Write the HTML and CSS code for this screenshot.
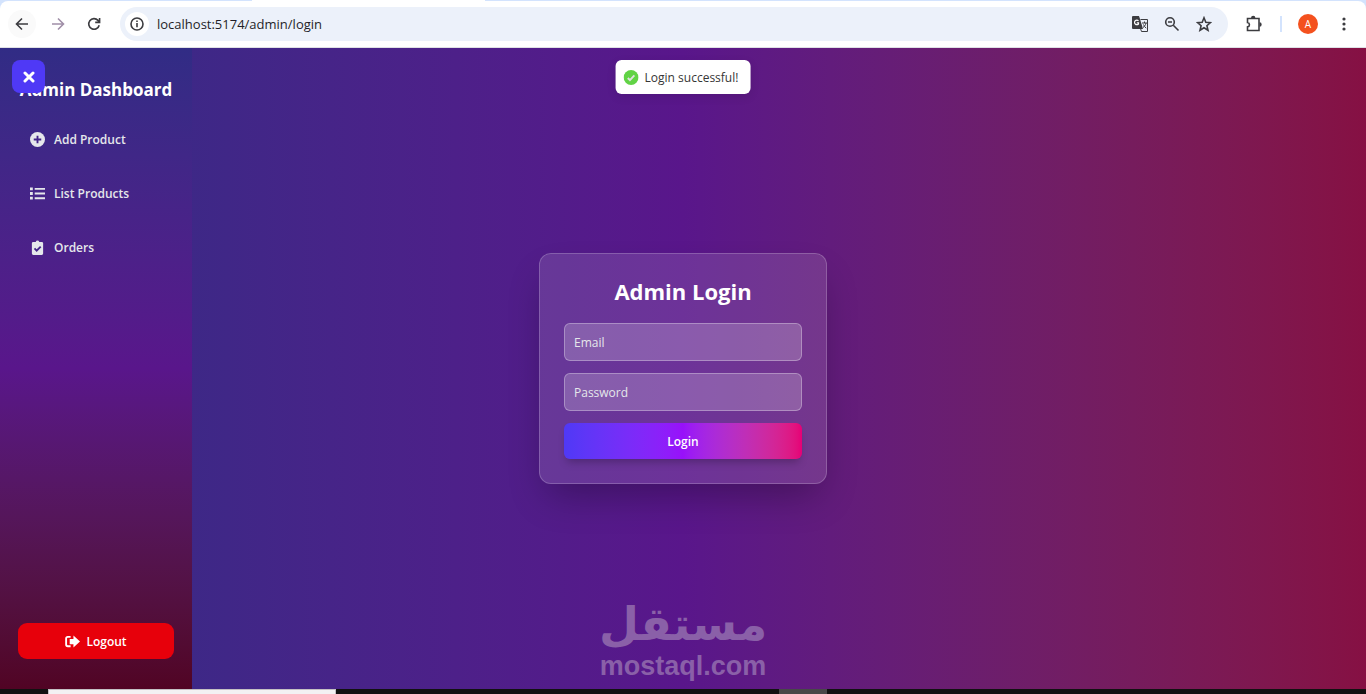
FILE: index.html
```
<!DOCTYPE html>
<html lang="en">
<head>
  <meta charset="UTF-8" />
  <meta name="viewport" content="width=device-width, initial-scale=1" />
  <title>Admin Login</title>
  <link rel="stylesheet" href="styles.css">
</head>
<body>
  <header class="browser">
    <div class="tab"></div>
    <div class="toolbar">
      <button class="tool back" type="button" aria-label="Back">
        <svg width="16" height="16" viewBox="0 0 16 16"><path d="M14 8H3M8 2.5L2.5 8L8 13.5" /></svg>
      </button>
      <button class="tool forward" type="button" aria-label="Forward">
        <svg width="16" height="16" viewBox="0 0 16 16"><path d="M2 8h11M8 2.5L13.5 8L8 13.5" /></svg>
      </button>
      <button class="tool" type="button" aria-label="Reload">
        <svg width="16" height="16" viewBox="0 0 16 16"><path d="M13.2 9.2A5.3 5.3 0 1 1 12 4.4L13.4 6M13.6 2v4.4H9.2" /></svg>
      </button>
      <div class="address">
        <button class="site-info" type="button" aria-label="Site information">
          <svg width="16" height="16" viewBox="0 0 16 16"><circle cx="8" cy="8" r="6" /><path d="M8 7v4.2M8 4.4v1.6" /></svg>
        </button>
        <input class="url" type="text" aria-label="Address" value="localhost:5174/admin/login">
        <button class="tool translate" type="button" aria-label="Translate">
          <svg width="18" height="18" viewBox="0 0 18 18">
            <path class="fill" d="M2 1h6l1 3 3 10H2a1 1 0 0 1-1-1V2a1 1 0 0 1 1-1z" />
            <path d="M9.500 4.500h7v12h-6l-1-3M11 8h5M13.500 6.500V8M15 8c-.4 2-1.500 3.500-3 4.500M12.500 9.500c.6 1.500 1.500 2.700 2.700 3.700" />
            <path class="knock" d="M7.500 5.800A2.300 2.300 0 1 0 7.500 9V7.800H5.800" />
          </svg>
        </button>
        <button class="tool" type="button" aria-label="Zoom">
          <svg width="16" height="16" viewBox="0 0 16 16"><circle cx="6" cy="6" r="4.300" /><path d="M9.300 9.300l5.200 5.200M4 6h4" /></svg>
        </button>
        <button class="tool" type="button" aria-label="Bookmark">
          <svg width="16" height="16" viewBox="0 0 16 16"><path d="M8 1.800l1.800 4.400 4.700.4-3.600 3.100 1.100 4.600L8 11.800l-4 2.500 1.100-4.600L1.500 6.600l4.700-.4z" /></svg>
        </button>
      </div>
      <button class="tool extensions" type="button" aria-label="Extensions">
        <svg width="18" height="18" viewBox="0 0 18 18">
          <path d="M2.500 3.500h11.500v12H2.500v-3.600c2.600-.4 2.600-4 0-4.400z" />
          <path class="fill" d="M6 3a2.200 2.200 0 0 1 4.400 0zM14.500 7.300a2.200 2.200 0 0 1 0 4.400z" />
        </svg>
      </button>
      <span class="divider"></span>
      <button class="avatar" type="button" aria-label="Profile">A</button>
      <button class="tool" type="button" aria-label="Menu">
        <svg width="16" height="16" viewBox="0 0 16 16"><g class="fill"><circle cx="8" cy="3" r="1.600" /><circle cx="8" cy="8" r="1.600" /><circle cx="8" cy="13" r="1.600" /></g></svg>
      </button>
    </div>
  </header>

  <div class="page">
    <aside class="sidebar">
      <h2 class="brand">Admin Dashboard</h2>
      <button class="close" type="button" aria-label="Close menu">
        <svg width="12" height="12" viewBox="0 0 12 12"><path d="M2 2l8 8M10 2l-8 8" /></svg>
      </button>
      <nav class="menu">
        <a href="#add">
          <svg width="15" height="15" viewBox="0 0 16 16"><circle cx="8" cy="8" r="8" /><path class="cut" d="M8 4v8M4 8h8" /></svg>
          Add Product
        </a>
        <a href="#list">
          <svg width="15" height="15" viewBox="0 0 16 16"><path d="M0 1.500h3v3H0zM0 6.500h3v3H0zM0 11.500h3v3H0zM5 2h11v2H5zM5 7h11v2H5zM5 12h11v2H5z" /></svg>
          List Products
        </a>
        <a href="#orders">
          <svg width="15" height="15" viewBox="0 0 16 16"><path d="M3.500 2h2.600a2 2 0 0 1 3.800 0h2.600A1.500 1.500 0 0 1 14 3.500v11a1.500 1.500 0 0 1-1.500 1.500h-9A1.500 1.500 0 0 1 2 14.500v-11A1.500 1.500 0 0 1 3.500 2z" /><path class="cut" d="M4.800 9l2.300 2.300L11.400 7" /></svg>
          Orders
        </a>
      </nav>
      <button class="logout" type="button">
        <svg width="15" height="15" viewBox="0 0 16 16"><path class="frame" d="M6 3H3a1.800 1.800 0 0 0-1.800 1.800v6.400A1.800 1.800 0 0 0 3 13h3" /><path d="M9 1.500L16 8L9 14.500V10.800H5V5.200h4z" /></svg>
        Logout
      </button>
    </aside>

    <main class="content">
      <form class="card">
        <h1>Admin Login</h1>
        <input type="email" placeholder="Email" aria-label="Email">
        <input type="password" placeholder="Password" aria-label="Password">
        <button type="submit">Login</button>
      </form>
    </main>

    <div class="toast" role="status">
      <svg width="15" height="15" viewBox="0 0 16 16"><circle cx="8" cy="8" r="8" /><path d="M4.500 8.500l2.300 2.300 4.700-5" /></svg>
      Login successful!
    </div>

    <div class="watermark">
      <span class="arabic" lang="ar" dir="rtl">مستقل</span>
      <span class="latin">mostaql.com</span>
    </div>
  </div>

  <footer class="taskbar">
    <span class="search"></span>
    <span class="active"></span>
  </footer>
</body>
</html>
```

FILE: styles.css
```
* {
  box-sizing: border-box;
}

body {
  margin: 0;
  height: 100vh;
  display: flex;
  flex-direction: column;
  overflow: hidden;
  background: #111;
  font-family: "Open Sans", "Segoe UI", sans-serif;
  font-size: 12px;
  color: white;
}

button,
input {
  font: inherit;
  color: inherit;
  border: none;
  padding: 0;
}

svg {
  flex: none;
}

/* browser bar */
.browser {
  height: 48px;
  background: #d3e3fd;
  border-bottom: 1px solid #dfe1e5;
}

.tab {
  width: 233px;
  height: 1px;
  margin-left: 252px;
  background: white;
}

.toolbar {
  height: 46px;
  display: flex;
  align-items: center;
  padding: 0 8px;
  gap: 8px;
  background: white;
  border-radius: 8px 8px 0 0;
}

.tool {
  width: 28px;
  height: 28px;
  display: grid;
  place-items: center;
  background: none;
  border-radius: 50%;
}

.tool svg,
.site-info svg {
  fill: none;
  stroke: #3c3c40;
  stroke-width: 1.6;
}

.tool .fill {
  fill: #3c3c40;
  stroke: none;
}

.tool .knock {
  stroke: white;
  stroke-width: 1.2;
}

.translate svg {
  stroke-width: 1;
}

.back {
  background: #fafafa;
}

.forward svg {
  stroke: #a08fa8;
}

.address {
  flex: 1;
  height: 34px;
  display: flex;
  align-items: center;
  gap: 4px;
  padding: 0 10px 0 5px;
  margin-left: 4px;
  background: #ecf1fa;
  border-radius: 17px;
}

.site-info {
  width: 24px;
  height: 24px;
  display: grid;
  place-items: center;
  background: white;
  border-radius: 50%;
}

.url {
  flex: 1;
  min-width: 0;
  margin-left: 4px;
  background: none;
  font-size: 13px;
  color: #1f1f28;
}

.extensions {
  margin-left: 4px;
}

.divider {
  width: 2px;
  height: 16px;
  margin: 0 8px 0 4px;
  background: #d3e3fd;
}

.avatar {
  width: 20px;
  height: 20px;
  margin-right: 4px;
  border-radius: 50%;
  background: #f4511e;
  font-size: 10px;
}

/* page */
.page {
  flex: 1;
  position: relative;
  display: flex;
  background: linear-gradient(to right in oklab, #312c85, #59168b, #861043);
}

.sidebar {
  width: 192px;
  display: flex;
  flex-direction: column;
  padding: 30px 18px;
  background: linear-gradient(to bottom in oklab, #312c85, #59168b, #510424);
}

.brand {
  margin: 0 0 16px;
  font-size: 17px;
  line-height: 24px;
  font-weight: 700;
  text-align: center;
  white-space: nowrap;
}

.close {
  position: absolute;
  top: 12px;
  left: 12px;
  width: 33px;
  height: 33px;
  display: grid;
  place-items: center;
  border-radius: 8px;
  background: #4f39f6;
}

.close svg {
  stroke: white;
  stroke-width: 3;
  stroke-linecap: round;
}

.menu {
  flex: 1;
  display: flex;
  flex-direction: column;
  gap: 12px;
}

.menu a {
  height: 42px;
  display: flex;
  align-items: center;
  gap: 9px;
  padding: 0 12px;
  color: #e5e7eb;
  font-weight: 600;
  text-decoration: none;
}

.menu svg {
  fill: #e5e7eb;
}

.menu .cut {
  fill: none;
  stroke: #432488;
  stroke-width: 2;
}

.logout {
  height: 36px;
  display: flex;
  align-items: center;
  justify-content: center;
  gap: 6px;
  border-radius: 9px;
  background: #e7000b;
  font-weight: 600;
}

.logout svg {
  fill: white;
}

.logout .frame {
  fill: none;
  stroke: white;
  stroke-width: 2;
}

.content {
  flex: 1;
  display: grid;
  place-items: center;
  padding-right: 192px;
}

.card {
  width: 288px;
  display: flex;
  flex-direction: column;
  gap: 12px;
  padding: 24px;
  border: 1px solid rgba(255, 255, 255, 0.2);
  border-radius: 12px;
  background: rgba(255, 255, 255, 0.12);
  box-shadow: 0 19px 38px -9px rgba(0, 0, 0, 0.3);
}

.card h1 {
  margin: 0 0 6px;
  font-size: 22px;
  line-height: 27px;
  font-weight: 700;
  text-align: center;
}

.card input {
  height: 38px;
  padding: 0 9px;
  border: 1px solid rgba(255, 255, 255, 0.3);
  border-radius: 6px;
  background: rgba(255, 255, 255, 0.2);
}

.card input::placeholder {
  color: #e5e7eb;
}

.card button {
  height: 36px;
  border-radius: 6px;
  background: linear-gradient(to right in oklab, #4f39f6, #9810fa, #e60076);
  box-shadow: 0 6px 9px -3px rgba(0, 0, 0, 0.25);
  font-weight: 600;
}

.toast {
  position: absolute;
  top: 12px;
  left: 50%;
  transform: translateX(-50%);
  height: 34px;
  display: flex;
  align-items: center;
  gap: 6px;
  padding: 0 12px 0 8px;
  border-radius: 6px;
  background: white;
  box-shadow: 0 3px 10px rgba(0, 0, 0, 0.1);
  color: #363636;
  white-space: nowrap;
}

.toast circle {
  fill: #61d345;
}

.toast path {
  fill: none;
  stroke: #e0e0e0;
  stroke-width: 2;
}

.watermark {
  position: absolute;
  bottom: 9px;
  left: 50%;
  transform: translateX(-50%);
  display: flex;
  flex-direction: column;
  align-items: center;
  color: #8a60a8;
  font-weight: 700;
}

.arabic {
  font-family: "DejaVu Sans", sans-serif;
  font-size: 46px;
  line-height: 56px;
}

.latin {
  font-family: "Liberation Sans", Arial, sans-serif;
  font-size: 27px;
  line-height: 28px;
}

/* strip under the page */
.taskbar {
  height: 5px;
  display: flex;
  justify-content: space-between;
  padding: 0 539px 0 48px;
  background: #111;
}

.search {
  width: 288px;
  background: #f3f1f3;
  border: 1px solid #c4c0c4;
  border-bottom: none;
}

.active {
  width: 48px;
  background: #484848;
}
```
